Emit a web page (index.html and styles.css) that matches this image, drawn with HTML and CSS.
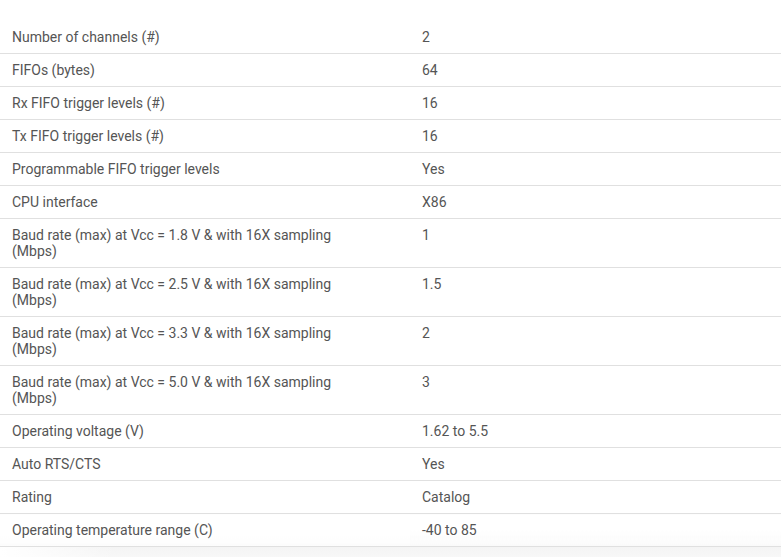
FILE: index.html
```html
<!DOCTYPE html>
<html lang="en">
<head>
<meta charset="utf-8">
<title>Parametrics</title>
<link rel="stylesheet" href="styles.css">
</head>
<body>
<div class="page">
  <table class="params">
    <tbody>
      <tr><td class="name">Number of channels (#)</td><td class="value">2</td></tr>
      <tr><td class="name">FIFOs (bytes)</td><td class="value">64</td></tr>
      <tr><td class="name">Rx FIFO trigger levels (#)</td><td class="value">16</td></tr>
      <tr><td class="name">Tx FIFO trigger levels (#)</td><td class="value">16</td></tr>
      <tr><td class="name">Programmable FIFO trigger levels</td><td class="value">Yes</td></tr>
      <tr><td class="name">CPU interface</td><td class="value">X86</td></tr>
      <tr><td class="name">Baud rate (max) at Vcc = 1.8 V &amp; with 16X sampling (Mbps)</td><td class="value">1</td></tr>
      <tr><td class="name">Baud rate (max) at Vcc = 2.5 V &amp; with 16X sampling (Mbps)</td><td class="value">1.5</td></tr>
      <tr><td class="name">Baud rate (max) at Vcc = 3.3 V &amp; with 16X sampling (Mbps)</td><td class="value">2</td></tr>
      <tr><td class="name">Baud rate (max) at Vcc = 5.0 V &amp; with 16X sampling (Mbps)</td><td class="value">3</td></tr>
      <tr><td class="name">Operating voltage (V)</td><td class="value">1.62 to 5.5</td></tr>
      <tr><td class="name">Auto RTS/CTS</td><td class="value">Yes</td></tr>
      <tr><td class="name">Rating</td><td class="value">Catalog</td></tr>
      <tr class="last"><td class="name">Operating temperature range (C)</td><td class="value">-40 to 85</td></tr>
    </tbody>
  </table>
  <div class="fade"></div>
</div>
</body>
</html>
```
FILE: styles.css
```css
html, body {
  margin: 0;
  padding: 0;
  background: #ffffff;
}
.page {
  padding-top: 21px;
  font-family: Roboto, "Liberation Sans", Arial, sans-serif;
  font-size: 14px;
  line-height: 16px;
  color: #555555;
}
.params {
  width: 100%;
  border-collapse: collapse;
  table-layout: fixed;
}
.params td {
  padding: 8px 12px;
  border-bottom: 1px solid #e0e0e0;
  vertical-align: top;
}
.params td.name {
  width: 340px;
  padding-right: 58px;
}
.params tr.last td {
  background: linear-gradient(to bottom, rgba(250,250,250,0) 50%, #fafafa 100%);
}
.params tr.last td.name {
  background: linear-gradient(to bottom, rgba(255,255,255,0) 70%, #fcfcfc 100%);
}
.fade {
  height: 11px;
  background:
    linear-gradient(to right, #ffffff 0%, rgba(255,255,255,0) 15%),
    linear-gradient(to bottom, #f4f4f4 0%, #f8f8f8 100%);
}
```
